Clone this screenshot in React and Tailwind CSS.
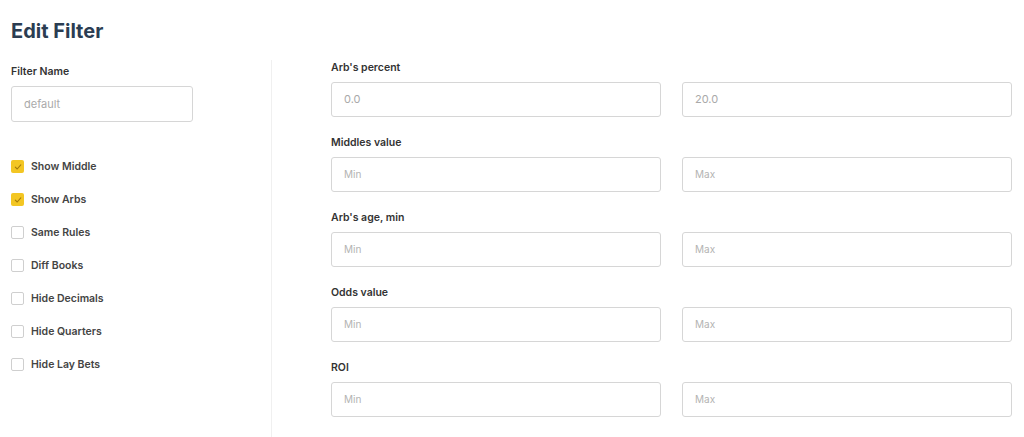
const toggles = [
  { label: "Show Middle", checked: true },
  { label: "Show Arbs", checked: true },
  { label: "Same Rules", checked: false },
  { label: "Diff Books", checked: false },
  { label: "Hide Decimals", checked: false },
  { label: "Hide Quarters", checked: false },
  { label: "Hide Lay Bets", checked: false },
];

const ranges = [
  { label: "Arb's percent", min: "0.0", max: "20.0", filled: true },
  { label: "Middles value", min: "Min", max: "Max" },
  { label: "Arb's age, min", min: "Min", max: "Max" },
  { label: "Odds value", min: "Min", max: "Max" },
  { label: "ROI", min: "Min", max: "Max" },
];

function Checkbox({ checked }) {
  return checked ? (
    <span className="w-[13px] h-[13px] rounded-[2px] bg-[#f3c623] flex items-center justify-center shrink-0">
      <svg width="8" height="8" viewBox="0 0 8 8" fill="none">
        <path d="M1.3 4.2 3.2 6 6.8 1.8" stroke="#a67c0a" strokeWidth="1.1" strokeLinecap="round" strokeLinejoin="round" />
      </svg>
    </span>
  ) : (
    <span className="w-[13px] h-[13px] rounded-[2px] border border-[#cfcfcf] bg-white shrink-0" />
  );
}

function RangeInput({ value, filled }) {
  return (
    <div className="h-[35px] border border-[#d6d6d6] rounded-[3px] bg-white flex items-center px-[12px]">
      <span className={filled ? "text-[11px] text-[#a9a9a9]" : "text-[10px] text-[#b3b3b3]"}>
        {value}
      </span>
    </div>
  );
}

export default function App() {
  return (
    <div
      className="min-h-[437px] bg-white px-[11px] pt-[17px] overflow-hidden"
      style={{ fontFamily: "Inter, 'Noto Sans', sans-serif" }}
    >
      <h1 className="text-[20px] leading-[28px] font-bold text-[#2b3d52]">Edit Filter</h1>

      <div className="flex mt-[15px] h-[392px]">
        <div className="w-[261px] border-r border-[#f0f0f0] shrink-0">
          <p className="mt-[5px] text-[10.5px] leading-[14px] font-semibold text-[#333]">Filter Name</p>
          <div className="mt-[7px] w-[182px] h-[36px] border border-[#d6d6d6] rounded-[3px] flex items-center px-[12px]">
            <span className="text-[11px] text-[#aaaaaa]">default</span>
          </div>

          <div className="mt-[38px] flex flex-col gap-[20px]">
            {toggles.map((t) => (
              <div key={t.label} className="flex items-center gap-[7px] h-[13px]">
                <Checkbox checked={t.checked} />
                <span className="text-[10.5px] font-semibold text-[#444]">{t.label}</span>
              </div>
            ))}
          </div>
        </div>

        <div className="flex-1 pl-[59px] pr-[1px] pt-[1px] flex flex-col gap-[19px]">
          {ranges.map((r) => (
            <div key={r.label}>
              <p className="text-[10.5px] leading-[14px] font-semibold text-[#333]">{r.label}</p>
              <div className="mt-[7px] grid grid-cols-2 gap-[21px]">
                <RangeInput value={r.min} filled={r.filled} />
                <RangeInput value={r.max} filled={r.filled} />
              </div>
            </div>
          ))}
        </div>
      </div>
    </div>
  );
}
